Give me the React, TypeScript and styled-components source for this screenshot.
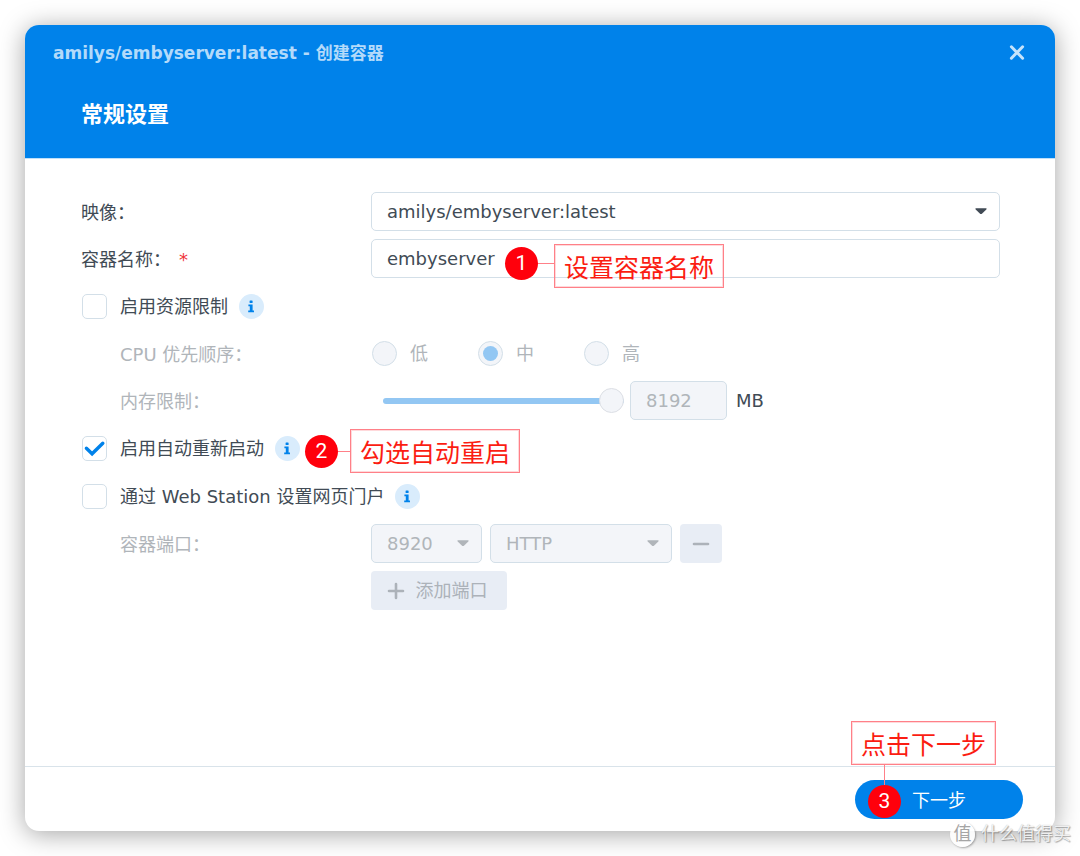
import React from "react";
import styled, { createGlobalStyle } from "styled-components";

const blue = "#0082ea";
const ink = "#414b55";
const faded = "#b0b5ba";
const line = "#d3dfe8";
const mutedFill = "#f3f5f9";
const paleBlue = "#93c7f3";
const red = "#ff000c";

const GlobalStyle = createGlobalStyle`
  *, *::before, *::after { box-sizing: border-box; }
  body {
    margin: 0;
    background: #fff;
    color: ${ink};
    font: 18px/26px "DejaVu Sans", "Noto Sans CJK SC", sans-serif;
  }
  button, input, select { font: inherit; color: inherit; margin: 0; }
`;

const Page = styled.div`
  position: relative;
  display: flex;
  min-height: 100vh;
  padding: 25px;
`;

const Dialog = styled.section`
  flex: 1;
  min-width: 0;
  display: flex;
  flex-direction: column;
  border-radius: 14px;
  background: #fff;
  box-shadow: 0 3px 26px rgba(0, 0, 0, 0.36);
`;

const Header = styled.header`
  height: 134px;
  padding: 15px 28px 0;
  border-bottom: 1px solid #bfe0fa;
  border-radius: 14px 14px 0 0;
  background: ${blue};
  background-clip: padding-box;
  color: #fff;
`;

const TitleBar = styled.div`
  display: flex;
  align-items: center;
  justify-content: space-between;
`;

const WindowTitle = styled.h1`
  margin: 0;
  font-size: 17px;
  line-height: 26px;
  font-weight: 700;
  color: #b3dafa;
`;

const CloseButton = styled.button`
  display: flex;
  padding: 2px;
  border: 0;
  background: none;
  color: #c5e3fb;
`;

const StepTitle = styled.h2`
  margin: 32px 28px 0;
  font-size: 22px;
  line-height: 34px;
  font-weight: 700;
`;

const Form = styled.form`
  flex: 1;
  display: flex;
  flex-direction: column;
  gap: 9px;
  padding: 33px 55px 33px 56px;
`;

const Group = styled.div`
  display: grid;
  gap: 8px;
`;

const Row = styled.div`
  position: relative;
  display: grid;
  grid-template-columns: 290px minmax(0, 1fr);
  align-items: center;
  min-height: 39px;
`;

const ToggleRow = styled.div`
  position: relative;
  display: flex;
  align-items: center;
  min-height: 39px;
`;

const Label = styled.label<{ $muted?: boolean }>`
  padding-top: 2px;
  padding-left: ${(p) => (p.$muted ? 39 : 0)}px;
  color: ${(p) => (p.$muted ? faded : ink)};
`;

const Required = styled.span`
  margin-left: 8px;
  color: #f0353b;
`;

const Choice = styled.label<{ $muted?: boolean }>`
  display: flex;
  align-items: center;
  gap: 13px;
  padding-left: 1px;
  color: ${(p) => (p.$muted ? faded : ink)};
`;

const CheckFrame = styled.span`
  position: relative;
  display: flex;
`;

const CheckInput = styled.input`
  appearance: none;
  width: 25px;
  height: 25px;
  border: 1px solid ${line};
  border-radius: 5px;
  background: #fff;
  & + svg { display: none; }
  &:checked + svg { display: block; }
`;

const CheckMark = styled.svg`
  position: absolute;
  inset: 0;
  pointer-events: none;
`;

const RadioInput = styled.input`
  appearance: none;
  display: grid;
  place-items: center;
  width: 25px;
  height: 25px;
  border: 1px solid ${line};
  border-radius: 50%;
  background: ${mutedFill};
  &:checked::after {
    content: "";
    width: 15px;
    height: 15px;
    border-radius: 50%;
    background: ${paleBlue};
  }
`;

const RadioSet = styled.div`
  display: grid;
  grid-template-columns: repeat(3, 106px);
`;

const InfoButton = styled.button`
  display: grid;
  place-items: center;
  width: 25px;
  height: 25px;
  margin-left: 11px;
  padding: 0;
  border: 0;
  border-radius: 50%;
  background: #d9ecfc;
  color: ${blue};
`;

const Field = styled.input`
  width: 100%;
  height: 39px;
  padding: 0 15px;
  border: 1px solid ${line};
  border-radius: 5px;
  background: #fff;
  &:disabled { background: ${mutedFill}; color: ${faded}; }
`;

const SelectFrame = styled.div`
  position: relative;
  color: ${ink};
  &:has(select:disabled) { color: ${faded}; }
`;

const SelectInput = styled.select`
  appearance: none;
  display: block;
  width: 100%;
  height: 39px;
  padding: 0 32px 0 15px;
  border: 1px solid ${line};
  border-radius: 5px;
  background: #fff;
  &:disabled { background: ${mutedFill}; opacity: 1; }
`;

const Arrow = styled.svg`
  position: absolute;
  right: 13px;
  top: 16px;
  pointer-events: none;
`;

const MemoryControls = styled.div`
  display: grid;
  grid-template-columns: 241px 97px auto;
  align-items: center;
  justify-content: start;
  padding-left: 12px;
  column-gap: 6px;
`;

const Unit = styled.span`
  padding-left: 3px;
`;

const Slider = styled.input`
  appearance: none;
  width: 100%;
  height: 25px;
  background: none;
  &::-webkit-slider-runnable-track {
    height: 6px;
    border-radius: 3px;
    background: ${paleBlue};
  }
  &::-webkit-slider-thumb {
    appearance: none;
    width: 25px;
    height: 25px;
    margin-top: -10px;
    border: 1px solid #dcdfe5;
    border-radius: 50%;
    background: ${mutedFill};
  }
`;

const PortControls = styled.div`
  display: grid;
  grid-template-columns: 111px 182px 42px;
  gap: 8px;
`;

const FlatButton = styled.button`
  display: flex;
  align-items: center;
  justify-content: center;
  gap: 11px;
  height: 39px;
  padding: 0 4px 0 0;
  border: 0;
  border-radius: 4px;
  background: #e8edf5;
  color: #acb2b9;
`;

const RemoveButton = styled(FlatButton)`
  padding: 0;
`;

const AddButton = styled(FlatButton)`
  grid-column: 2;
  width: 136px;
`;

const Footer = styled.footer`
  position: relative;
  display: flex;
  align-items: center;
  justify-content: flex-end;
  height: 65px;
  padding: 0 32px;
  border-top: 1px solid #d9e3ea;
`;

const NextButton = styled.button`
  width: 168px;
  height: 39px;
  padding: 3px 0 0;
  border: 0;
  border-radius: 20px;
  background: ${blue};
  color: #fff;
`;

const Callout = styled.div<{ $vertical?: boolean; $x?: number; $top: number }>`
  position: absolute;
  z-index: 1;
  top: ${(p) => p.$top}px;
  ${(p) => (p.$vertical ? "right: 59px;" : `left: ${p.$x}px;`)}
  display: flex;
  flex-direction: ${(p) => (p.$vertical ? "column-reverse" : "row")};
  align-items: flex-start;
  pointer-events: none;
`;

const Badge = styled.span<{ $vertical?: boolean; $drop: number }>`
  width: 33px;
  height: 33px;
  margin-top: ${(p) => p.$drop}px;
  margin-left: ${(p) => (p.$vertical ? 17 : 0)}px;
  border-radius: 50%;
  background: ${red};
  color: #fff;
  font: 21px/32px Roboto, sans-serif;
  text-align: center;
`;

const Connector = styled.span<{ $vertical?: boolean; $drop: number; $length: number }>`
  width: ${(p) => (p.$vertical ? 1 : p.$length)}px;
  height: ${(p) => (p.$vertical ? p.$length : 1)}px;
  margin-top: ${(p) => (p.$vertical ? 0 : p.$drop + 16)}px;
  margin-left: ${(p) => (p.$vertical ? 33 : 0)}px;
  background: #ff8088;
`;

const Note = styled.span`
  padding: 0 9px;
  border: 1px solid #ff8088;
  outline: 1px solid rgba(255, 128, 136, 0.3);
  outline-offset: -2px;
  color: #fb1d12;
  font: 25px/42px "Noto Sans CJK SC", sans-serif;
  white-space: nowrap;
`;

const Watermark = styled.div`
  position: absolute;
  right: 9px;
  bottom: 9px;
  display: flex;
  align-items: center;
  gap: 6px;
  color: rgba(255, 255, 255, 0.85);
  font-size: 18px;
  text-shadow: 1px 1px 1px rgba(0, 0, 0, 0.3), 0 0 1px rgba(0, 0, 0, 0.3);
`;

const WatermarkSeal = styled.span`
  width: 25px;
  height: 25px;
  border-radius: 50%;
  background: rgba(255, 255, 255, 0.9);
  box-shadow: 1px 1px 2px rgba(0, 0, 0, 0.3);
  color: #a5a5a5;
  font-size: 18px;
  line-height: 24px;
  text-align: center;
  text-shadow: none;
`;

const Info = ({ topic }: { topic: string }) => (
  <InfoButton type="button" aria-label={topic}>
    <svg width="7" height="13" viewBox="0 0 7 13" fill="currentColor" aria-hidden="true">
      <rect x="1.6" y="0.5" width="3" height="2.5" rx="0.6" />
      <path d="M0.4 4.6H4.6V10.4H6V12.2H0.2V10.4H1.8V6.3H0.4Z" />
    </svg>
  </InfoButton>
);

const Check = ({ id, checked }: { id: string; checked?: boolean }) => (
  <CheckFrame>
    <CheckInput id={id} type="checkbox" defaultChecked={checked} />
    <CheckMark width="25" height="25" viewBox="0 0 25 25" fill="none" aria-hidden="true">
      <path d="M4.4 12.2L10.1 17.8L20.8 7.2" stroke={blue} strokeWidth="3.4" strokeLinecap="round" />
    </CheckMark>
  </CheckFrame>
);

type SelectProps = { id: string; value: string; disabled?: boolean; label?: string };

const Select = ({ id, value, disabled, label }: SelectProps) => (
  <SelectFrame>
    <SelectInput id={id} disabled={disabled} aria-label={label}>
      <option>{value}</option>
    </SelectInput>
    <Arrow width="12" height="7" viewBox="0 0 12 7" fill="currentColor" aria-hidden="true">
      <path d="M1 0.3H11Q12.2 0.5 11.3 1.4L7.2 5.4Q6 6.5 4.8 5.4L0.7 1.4Q-0.2 0.5 1 0.3Z" />
    </Arrow>
  </SelectFrame>
);

type StepProps = {
  step: number;
  text: string;
  top: number;
  length: number;
  x?: number;
  drop?: number;
  vertical?: boolean;
};

const Step = ({ step, text, top, length, x, drop = 0, vertical }: StepProps) => (
  <Callout $top={top} $x={x} $vertical={vertical}>
    <Badge $vertical={vertical} $drop={drop}>{step}</Badge>
    <Connector $vertical={vertical} $drop={drop} $length={length} />
    <Note>{text}</Note>
  </Callout>
);

const priorities = ["低", "中", "高"];

export default function App() {
  return (
    <Page>
      <GlobalStyle />
      <Dialog>
        <Header>
          <TitleBar>
            <WindowTitle>amilys/embyserver:latest - 创建容器</WindowTitle>
            <CloseButton type="button" aria-label="关闭">
              <svg width="16" height="16" viewBox="0 0 16 16" fill="none" aria-hidden="true">
                <path d="M2.4 1.8L13.6 13.2M13.6 1.8L2.4 13.2" stroke="currentColor" strokeWidth="3" strokeLinecap="round" />
              </svg>
            </CloseButton>
          </TitleBar>
          <StepTitle>常规设置</StepTitle>
        </Header>

        <Form>
          <Group>
            <Row>
              <Label htmlFor="image">映像：</Label>
              <Select id="image" value="amilys/embyserver:latest" />
            </Row>
            <Row>
              <Label htmlFor="name">
                容器名称：<Required>*</Required>
              </Label>
              <Field id="name" type="text" defaultValue="embyserver" />
              <Step step={1} text="设置容器名称" x={424} top={5} drop={3} length={16} />
            </Row>
          </Group>

          <Group>
            <ToggleRow>
              <Choice>
                <Check id="limit" />
                启用资源限制
              </Choice>
              <Info topic="资源限制说明" />
            </ToggleRow>
            <Row>
              <Label as="span" $muted>CPU 优先顺序：</Label>
              <RadioSet role="radiogroup" aria-label="CPU 优先顺序">
                {priorities.map((name) => (
                  <Choice key={name} $muted>
                    <RadioInput type="radio" name="cpu" disabled defaultChecked={name === "中"} />
                    {name}
                  </Choice>
                ))}
              </RadioSet>
            </Row>
            <Row>
              <Label htmlFor="memory" $muted>内存限制：</Label>
              <MemoryControls>
                <Slider type="range" min={0} max={8192} defaultValue={8192} disabled aria-label="内存限制" />
                <Field id="memory" type="text" defaultValue="8192" disabled />
                <Unit>MB</Unit>
              </MemoryControls>
            </Row>
          </Group>

          <ToggleRow>
            <Choice>
              <Check id="restart" checked />
              启用自动重新启动
            </Choice>
            <Info topic="自动重新启动说明" />
            <Step step={2} text="勾选自动重启" x={224} top={0} drop={6} length={12} />
          </ToggleRow>

          <Group>
            <ToggleRow>
              <Choice>
                <Check id="portal" />
                通过 Web Station 设置网页门户
              </Choice>
              <Info topic="网页门户说明" />
            </ToggleRow>
            <Row>
              <Label htmlFor="port" $muted>容器端口：</Label>
              <PortControls>
                <Select id="port" value="8920" disabled />
                <Select id="protocol" value="HTTP" disabled label="协议" />
                <RemoveButton type="button" disabled aria-label="删除端口">
                  <svg width="18" height="18" viewBox="0 0 18 18" aria-hidden="true">
                    <path d="M2 9H16" stroke="currentColor" strokeWidth="2.6" strokeLinecap="round" />
                  </svg>
                </RemoveButton>
              </PortControls>
            </Row>
            <Row>
              <AddButton type="button" disabled>
                <svg width="18" height="18" viewBox="0 0 18 18" aria-hidden="true">
                  <path d="M2 9H16M9 2V16" stroke="currentColor" strokeWidth="2.6" strokeLinecap="round" />
                </svg>
                添加端口
              </AddButton>
            </Row>
          </Group>
        </Form>

        <Footer>
          <NextButton type="button">下一步</NextButton>
          <Step step={3} text="点击下一步" top={-46} length={20} vertical />
        </Footer>
      </Dialog>
      <Watermark>
        <WatermarkSeal>值</WatermarkSeal>
        什么值得买
      </Watermark>
    </Page>
  );
}
